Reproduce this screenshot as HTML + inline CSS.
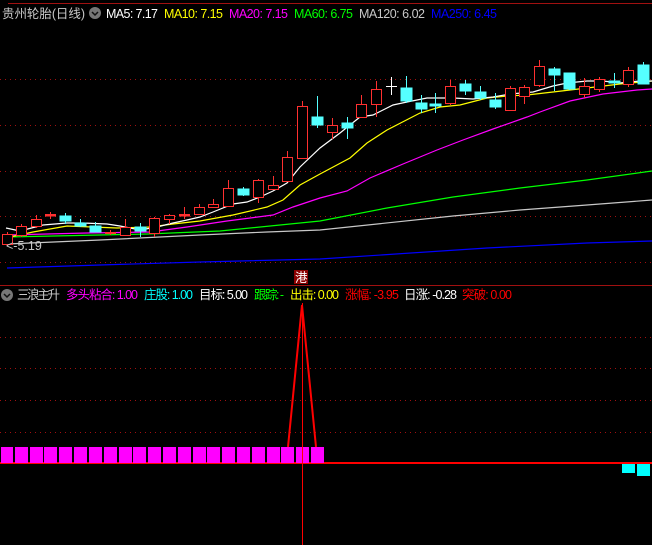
<!DOCTYPE html>
<html><head><meta charset="utf-8"><style>
html,body{margin:0;padding:0;background:#000;width:652px;height:545px;overflow:hidden}
svg{display:block}
text{font-family:"Liberation Sans","Noto Sans CJK SC",sans-serif;font-size:12.5px}
</style></head><body>
<svg width="652" height="545" viewBox="0 0 652 545" xmlns="http://www.w3.org/2000/svg">
<rect width="652" height="545" fill="#000"/>
<line x1="8" y1="3.5" x2="652" y2="3.5" stroke="#a01010" stroke-width="1"/>
<g stroke="#a01010" stroke-width="1" stroke-dasharray="1,4">
<line x1="0" y1="79.5" x2="652" y2="79.5"/><line x1="0" y1="125.5" x2="652" y2="125.5"/>
<line x1="0" y1="171.5" x2="652" y2="171.5"/><line x1="0" y1="216.5" x2="652" y2="216.5"/>
<line x1="0" y1="262.5" x2="652" y2="262.5"/>
<line x1="0" y1="337.5" x2="652" y2="337.5"/><line x1="0" y1="368.5" x2="652" y2="368.5"/>
<line x1="0" y1="400.5" x2="652" y2="400.5"/><line x1="0" y1="432.5" x2="652" y2="432.5"/>
</g>
<line x1="0" y1="285.5" x2="652" y2="285.5" stroke="#a01010" stroke-width="1"/>
<text x="2" y="18" fill="#c8c8c8" textLength="83">贵州轮胎(日线)</text>
<circle cx="95" cy="13" r="6" fill="#777"/><path d="M92 12l3 3 3-3" stroke="#111" stroke-width="1.5" fill="none"/>
<text x="106" y="18" fill="#fff" textLength="52">MA5: 7.17</text>
<text x="164" y="18" fill="#ff0" textLength="59">MA10: 7.15</text>
<text x="229" y="18" fill="#f0f" textLength="59">MA20: 7.15</text>
<text x="294" y="18" fill="#0f0" textLength="59">MA60: 6.75</text>
<text x="359" y="18" fill="#c8c8c8" textLength="66">MA120: 6.02</text>
<text x="431" y="18" fill="#00f" textLength="66">MA250: 6.45</text>
<g fill="none" stroke-width="1.2">
<polyline stroke="#00f" points="7,268 100,265 200,262 320,259 487,248 587,243 652,241"/>
<polyline stroke="#c8c8c8" points="7,244 100,240 200,235 267,232 320,230 453,216 520,210 587,205 652,200"/>
<polyline stroke="#0f0" points="7,237 147,234 220,231 300,223 320,221 387,208 453,197 520,188 587,180 652,171"/>
<polyline stroke="#f0f" points="7,235 87,233 150,232 187,227 227,221 273,215 293,207 320,198 347,191 370,178 403,164 437,150 463,140 493,129 527,117 540,112 570,101 603,94 637,90 652,89"/>
<polyline stroke="#ff0" points="10,237 33,232 67,226 117,228 150,227 173,224 200,221 233,215 267,207 283,200 300,185 320,174 350,158 367,143 387,130 420,113 440,107 460,105 487,98 507,96 527,95 553,92 587,88 620,84 652,81"/>
<polyline stroke="#fff" points="6,228 20,231 43,225 67,223 83,223 107,224 120,226 140,230 157,227 173,223 187,220 200,217 213,212 233,204 247,202 260,197 273,191 287,183 300,167 320,148 340,133 360,117 373,115 393,105 407,102 427,98 453,98 473,99 493,97 510,94 533,92 553,86 567,83 587,81 603,81 620,83 640,81 652,81"/>
</g>
<g stroke="#ff3030" fill="#000" stroke-width="1">
<line x1="7.5" y1="232" x2="7.5" y2="246"/><rect x="2.5" y="234.5" width="10" height="10"/>
<line x1="21.5" y1="224" x2="21.5" y2="237"/><rect x="16.5" y="226.5" width="10" height="9"/>
<line x1="36.5" y1="215" x2="36.5" y2="228"/><rect x="31.5" y="219.5" width="10" height="7"/>
<line x1="50.5" y1="212" x2="50.5" y2="219"/><rect x="45.5" y="214.5" width="10" height="1.5" fill="#ff3030"/>
<line x1="110.5" y1="230" x2="110.5" y2="235"/><rect x="105.5" y="232.5" width="10" height="1" fill="#ff3030"/>
<line x1="125.5" y1="219" x2="125.5" y2="236"/><rect x="120.5" y="227.5" width="10" height="8"/>
<line x1="154.5" y1="217" x2="154.5" y2="237"/><rect x="149.5" y="218.5" width="10" height="15"/>
<line x1="169.5" y1="214" x2="169.5" y2="224"/><rect x="164.5" y="215.5" width="10" height="4"/>
<line x1="184.5" y1="207" x2="184.5" y2="219"/><rect x="179.5" y="214.5" width="10" height="1.5" fill="#ff3030"/>
<line x1="199.5" y1="204" x2="199.5" y2="208"/><rect x="194.5" y="207.5" width="10" height="7"/>
<line x1="213.5" y1="199" x2="213.5" y2="205"/><rect x="208.5" y="204.5" width="10" height="3"/>
<line x1="228.5" y1="180" x2="228.5" y2="189"/><rect x="223.5" y="188.5" width="10" height="18"/>
<line x1="258.5" y1="179" x2="258.5" y2="203"/><rect x="253.5" y="180.5" width="10" height="17"/>
<line x1="273.5" y1="176" x2="273.5" y2="186"/><rect x="268.5" y="185.5" width="10" height="4"/>
<line x1="287.5" y1="151" x2="287.5" y2="158"/><rect x="282.5" y="157.5" width="10" height="24"/>
<line x1="302.5" y1="101" x2="302.5" y2="158"/><rect x="297.5" y="106.5" width="10" height="52"/>
<line x1="332.5" y1="118" x2="332.5" y2="139"/><rect x="327.5" y="125.5" width="10" height="7"/>
<line x1="361.5" y1="95" x2="361.5" y2="117"/><rect x="356.5" y="104.5" width="10" height="13"/>
<line x1="376.5" y1="81" x2="376.5" y2="117"/><rect x="371.5" y="89.5" width="10" height="15"/>
<line x1="450.5" y1="80" x2="450.5" y2="105"/><rect x="445.5" y="86.5" width="10" height="17"/>
<line x1="510.5" y1="86" x2="510.5" y2="111"/><rect x="505.5" y="88.5" width="10" height="22"/>
<line x1="524.5" y1="85" x2="524.5" y2="104"/><rect x="519.5" y="87.5" width="10" height="9"/>
<line x1="539.5" y1="60" x2="539.5" y2="87"/><rect x="534.5" y="66.5" width="10" height="19"/>
<line x1="584.5" y1="78" x2="584.5" y2="98"/><rect x="579.5" y="86.5" width="10" height="8"/>
<line x1="599.5" y1="77" x2="599.5" y2="92"/><rect x="594.5" y="79.5" width="10" height="10"/>
<line x1="628.5" y1="67" x2="628.5" y2="87"/><rect x="623.5" y="70.5" width="10" height="14"/>
</g>
<g stroke="#fff"><line x1="391.5" y1="77" x2="391.5" y2="95"/><line x1="386" y1="86.5" x2="397" y2="86.5"/></g>
<g stroke="#55ffff" fill="#55ffff" stroke-width="1">
<line x1="65.5" y1="213" x2="65.5" y2="224"/><rect x="60" y="216" width="11" height="5"/>
<line x1="80.5" y1="219" x2="80.5" y2="227"/><rect x="75" y="223" width="11" height="3"/>
<line x1="95.5" y1="222" x2="95.5" y2="232"/><rect x="90" y="226" width="11" height="6"/>
<line x1="140.5" y1="223" x2="140.5" y2="237"/><rect x="135" y="227" width="11" height="4"/>
<line x1="243.5" y1="187" x2="243.5" y2="196"/><rect x="238" y="189" width="11" height="6"/>
<line x1="317.5" y1="96" x2="317.5" y2="128"/><rect x="312" y="117" width="11" height="8"/>
<line x1="347.5" y1="117" x2="347.5" y2="139"/><rect x="342" y="123" width="11" height="5"/>
<line x1="406.5" y1="76" x2="406.5" y2="103"/><rect x="401" y="88" width="11" height="13"/>
<line x1="421.5" y1="95" x2="421.5" y2="113"/><rect x="416" y="103" width="11" height="6"/>
<line x1="435.5" y1="93" x2="435.5" y2="113"/><rect x="430" y="104" width="11" height="2"/>
<line x1="465.5" y1="80" x2="465.5" y2="95"/><rect x="460" y="84" width="11" height="7"/>
<line x1="480.5" y1="86" x2="480.5" y2="100"/><rect x="475" y="92" width="11" height="6"/>
<line x1="495.5" y1="93" x2="495.5" y2="109"/><rect x="490" y="100" width="11" height="7"/>
<line x1="554.5" y1="67" x2="554.5" y2="91"/><rect x="549" y="69" width="11" height="6"/>
<line x1="569.5" y1="73" x2="569.5" y2="90"/><rect x="564" y="73" width="11" height="16"/>
<line x1="614.5" y1="73" x2="614.5" y2="88"/><rect x="609" y="81" width="11" height="2"/>
<line x1="643.5" y1="62" x2="643.5" y2="84"/><rect x="638" y="65" width="11" height="19"/>
</g>
<text x="6" y="250" fill="#c8c8c8" font-size="11">&lt;-5.19</text>
<rect x="294" y="270" width="14" height="14" fill="#8b0000"/>
<text x="295" y="282" fill="#fff" font-size="12">港</text>
<circle cx="7" cy="295" r="6" fill="#777"/><path d="M4 294l3 3 3-3" stroke="#111" stroke-width="1.5" fill="none"/>
<g font-size="12">
<text x="17" y="299" fill="#c8c8c8" textLength="43">三浪主升</text>
<text x="66" y="299" fill="#f0f" textLength="72">多头粘合: 1.00</text>
<text x="144" y="299" fill="#0ff" textLength="49">庄股: 1.00</text>
<text x="199" y="299" fill="#fff" textLength="49">目标: 5.00</text>
<text x="254" y="299" fill="#0f0" textLength="30">跟踪: -</text>
<text x="290" y="299" fill="#ff0" textLength="49">出击: 0.00</text>
<text x="345" y="299" fill="#f00" textLength="54">涨幅: -3.95</text>
<text x="404" y="299" fill="#fff" textLength="53">日涨: -0.28</text>
<text x="462" y="299" fill="#f00" textLength="50">突破: 0.00</text>
</g>
<line x1="0" y1="463" x2="652" y2="463" stroke="#f00" stroke-width="2"/>
<g fill="#f0f">
<rect x="1" y="447" width="12" height="16"/><rect x="15" y="447" width="13" height="16"/><rect x="30" y="447" width="13" height="16"/><rect x="44" y="447" width="13" height="16"/><rect x="59" y="447" width="13" height="16"/><rect x="74" y="447" width="13" height="16"/><rect x="89" y="447" width="13" height="16"/><rect x="104" y="447" width="13" height="16"/><rect x="119" y="447" width="13" height="16"/><rect x="133" y="447" width="13" height="16"/><rect x="148" y="447" width="13" height="16"/><rect x="163" y="447" width="13" height="16"/><rect x="178" y="447" width="13" height="16"/><rect x="193" y="447" width="13" height="16"/><rect x="207" y="447" width="13" height="16"/><rect x="222" y="447" width="13" height="16"/><rect x="237" y="447" width="13" height="16"/><rect x="252" y="447" width="13" height="16"/><rect x="267" y="447" width="13" height="16"/><rect x="281" y="447" width="13" height="16"/><rect x="296" y="447" width="13" height="16"/><rect x="311" y="447" width="13" height="16"/>
</g>
<g fill="#0ff"><rect x="622" y="464" width="13" height="9"/><rect x="637" y="464" width="13" height="12"/></g>
<polyline points="288,447 302,305 316,447" fill="none" stroke="#f00" stroke-width="2"/>
<line x1="302.5" y1="303" x2="302.5" y2="545" stroke="#f00" stroke-width="1"/>
</svg>
</body></html>
